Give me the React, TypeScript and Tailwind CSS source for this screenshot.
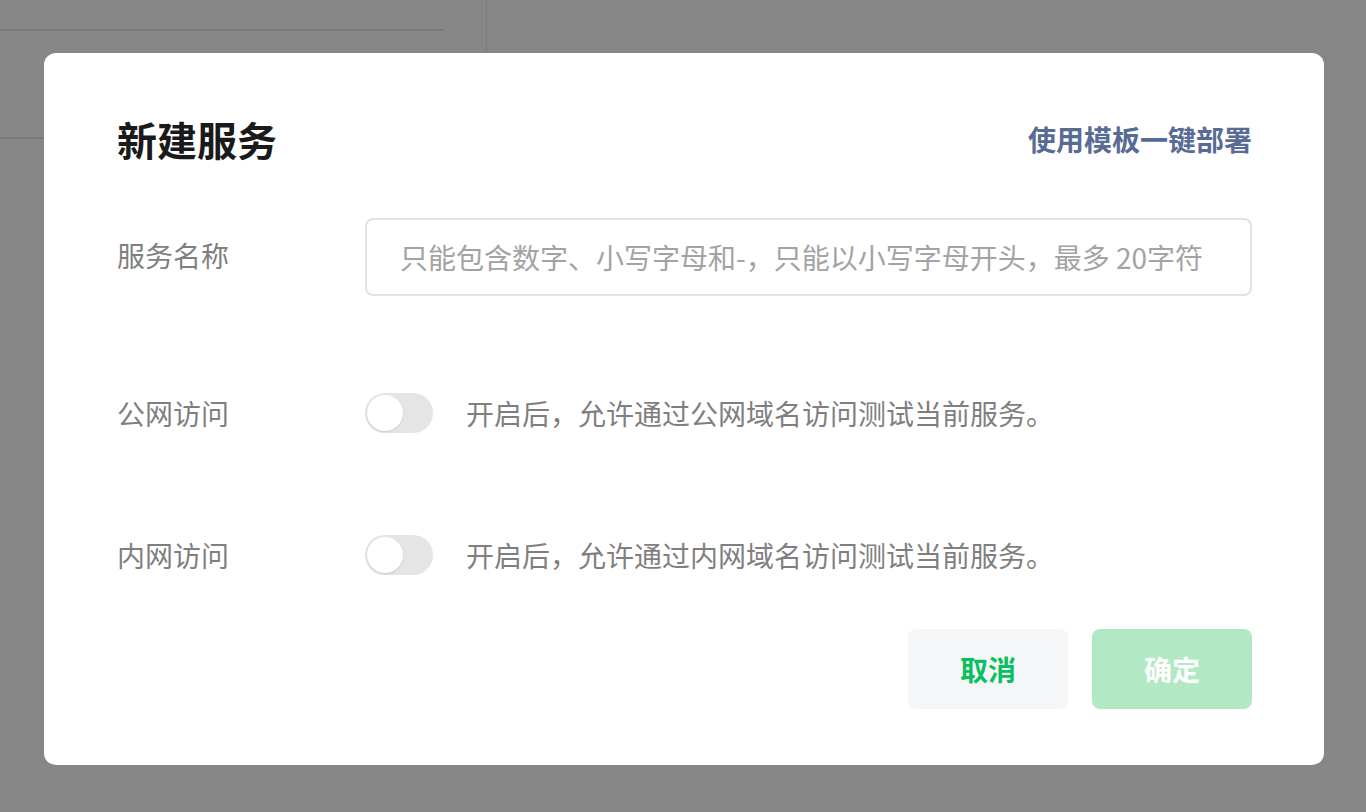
import React from "react";

const font = { fontFamily: '"Noto Sans CJK SC", "Noto Sans", sans-serif' };

function Toggle() {
  return (
    <div className="w-[68px] h-[40px] rounded-full bg-[#e5e5e5] flex items-center px-[2px] shrink-0">
      <div className="w-[36px] h-[36px] rounded-full bg-white shadow-[0_1px_2px_rgba(0,0,0,0.12)]" />
    </div>
  );
}

function Row({ label, desc }: { label: string; desc: string }) {
  return (
    <div className="flex items-center h-[40px]">
      <div className="w-[248px] shrink-0 text-[28px] leading-[40px] text-[#7f7f7f]">{label}</div>
      <Toggle />
      <div className="ml-[33px] text-[28px] leading-[40px] text-[#7f7f7f]">{desc}</div>
    </div>
  );
}

export default function App() {
  return (
    <div className="relative w-[1366px] h-[812px] overflow-hidden bg-white" style={font}>
      {/* underlying page */}
      <div className="flex">
        <div className="w-[487px] h-[200px] border-r border-[#e8e8e8]">
          <div className="h-[31px] w-[444px] border-b-2 border-[#e8e8e8]" />
          <div className="h-[108px] border-b-2 border-[#e8e8e8]" />
        </div>
      </div>
      {/* overlay */}
      <div className="absolute inset-0 bg-black/[0.47] flex justify-center pt-[53px] pl-[2px]">
        <div className="w-[1280px] h-[712px] bg-white rounded-[12px] pl-[73px] pr-[72px] pt-[58px] pb-[56px] flex flex-col">
          <div className="flex items-center justify-between h-[56px]">
            <div className="text-[40px] leading-[56px] font-bold text-[#1a1a1a]">新建服务</div>
            <div className="text-[28px] leading-[40px] font-semibold text-[#576b95]">使用模板一键部署</div>
          </div>
          <div className="flex items-center mt-[51px]">
            <div className="w-[248px] shrink-0 text-[28px] leading-[40px] text-[#7f7f7f] -mt-[4px]">服务名称</div>
            <input
              className="flex-1 h-[78px] border-2 border-[#e2e2e2] rounded-[8px] px-[33px] text-[28px] text-[#1a1a1a] placeholder:text-[#a3a3a3] outline-none"
              style={font}
              placeholder="只能包含数字、小写字母和-，只能以小写字母开头，最多 20字符"
            />
          </div>
          <div className="mt-[97px]">
            <Row label="公网访问" desc="开启后，允许通过公网域名访问测试当前服务。" />
          </div>
          <div className="mt-[102px]">
            <Row label="内网访问" desc="开启后，允许通过内网域名访问测试当前服务。" />
          </div>
          <div className="flex justify-end gap-[24px] mt-[54px]">
            <button className="w-[160px] h-[80px] rounded-[8px] bg-[#f5f6f7] text-[#07c160] text-[28px] font-bold" style={font}>
              取消
            </button>
            <button className="w-[160px] h-[80px] rounded-[8px] bg-[#b3e8c4] text-white text-[28px] font-bold" style={font}>
              确定
            </button>
          </div>
        </div>
      </div>
    </div>
  );
}
